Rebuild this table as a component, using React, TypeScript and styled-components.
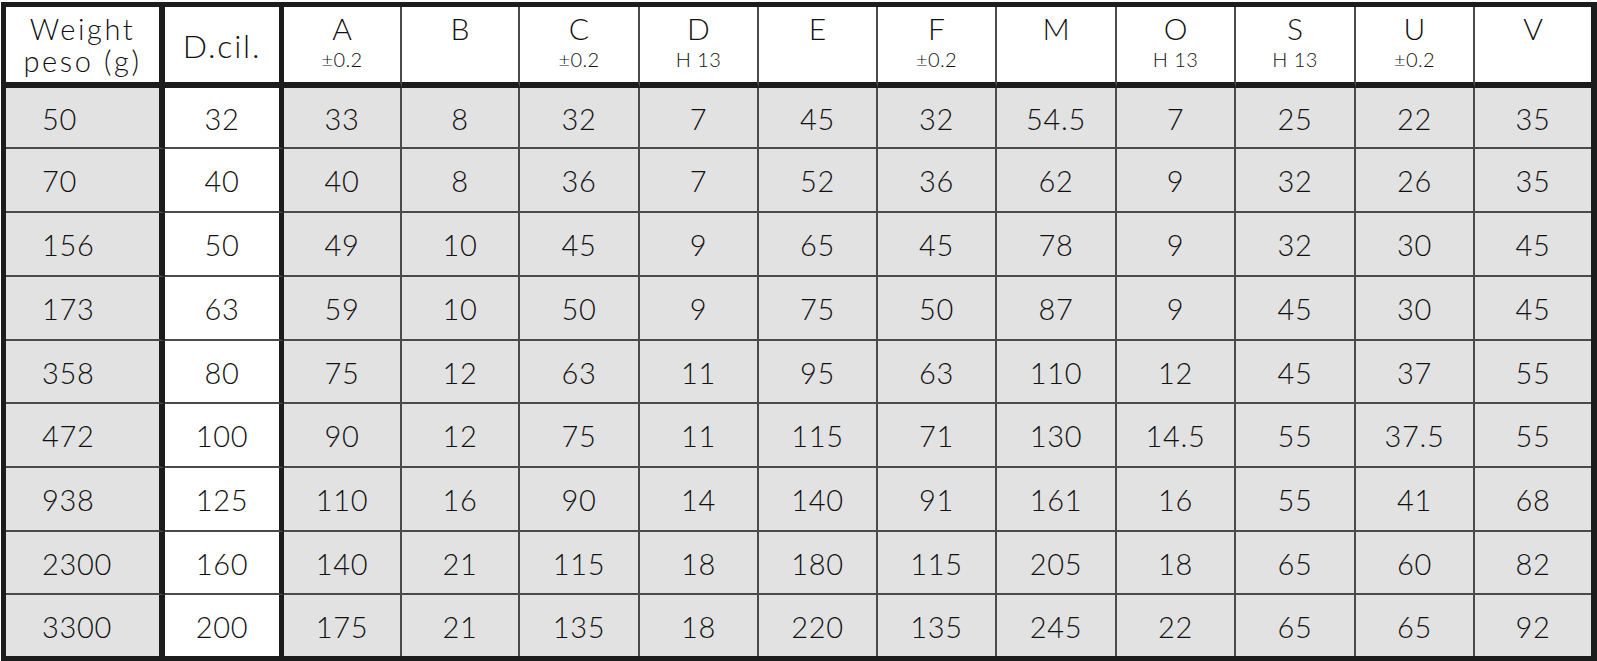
import React from 'react';
import styled, { createGlobalStyle } from 'styled-components';

interface HeadCol {
  main: string;
  sub?: string;
}

const GlobalStyle = createGlobalStyle`
  html, body {
    margin: 0;
    padding: 0;
    background: #ffffff;
  }
  body {
    font-family: Lato, "Open Sans", sans-serif;
    font-weight: 300;
    color: #111;
  }
`;

const colWidths = [159, 119, 118, 118, 120, 119, 119, 119, 120, 119, 120, 119, 116];
const rowHeights = [81, 61, 64, 64, 64, 63, 64, 64, 63, 61];

const headCols: HeadCol[] = [
  { main: 'A', sub: '±0.2' },
  { main: 'B' },
  { main: 'C', sub: '±0.2' },
  { main: 'D', sub: 'H 13' },
  { main: 'E' },
  { main: 'F', sub: '±0.2' },
  { main: 'M' },
  { main: 'O', sub: 'H 13' },
  { main: 'S', sub: 'H 13' },
  { main: 'U', sub: '±0.2' },
  { main: 'V' },
];

const rows: string[][] = [
  ['50', '32', '33', '8', '32', '7', '45', '32', '54.5', '7', '25', '22', '35'],
  ['70', '40', '40', '8', '36', '7', '52', '36', '62', '9', '32', '26', '35'],
  ['156', '50', '49', '10', '45', '9', '65', '45', '78', '9', '32', '30', '45'],
  ['173', '63', '59', '10', '50', '9', '75', '50', '87', '9', '45', '30', '45'],
  ['358', '80', '75', '12', '63', '11', '95', '63', '110', '12', '45', '37', '55'],
  ['472', '100', '90', '12', '75', '11', '115', '71', '130', '14.5', '55', '37.5', '55'],
  ['938', '125', '110', '16', '90', '14', '140', '91', '161', '16', '55', '41', '68'],
  ['2300', '160', '140', '21', '115', '18', '180', '115', '205', '18', '65', '60', '82'],
  ['3300', '200', '175', '21', '135', '18', '220', '135', '245', '22', '65', '65', '92'],
];

const DARK = '#1c1c1c';
const THIN = '#4a4a4a';

const rightBorder = (col: number) => {
  if (col === 0) return `6px solid ${DARK}`;
  if (col === 1) return `5px solid ${DARK}`;
  if (col === colWidths.length - 1) return 'none';
  return `2px solid ${THIN}`;
};

const Page = styled.div`
  padding: 2px 0 0 1px;
`;

const Table = styled.div`
  display: grid;
  grid-template-columns: ${colWidths.map((w) => `${w}px`).join(' ')};
  grid-template-rows: ${rowHeights.map((h) => `${h}px`).join(' ')};
  width: max-content;
  border: 5px solid ${DARK};
  border-right-width: 6px;
`;

const Cell = styled.div<{ $col: number; $last?: boolean }>`
  box-sizing: border-box;
  display: flex;
  align-items: center;
  justify-content: ${(p) => (p.$col === 0 ? 'flex-start' : 'center')};
  padding-left: ${(p) => (p.$col === 0 ? '36px' : '0')};
  padding-top: 1px;
  background: ${(p) => (p.$col === 1 ? '#ffffff' : '#e1e2e1')};
  border-right: ${(p) => rightBorder(p.$col)};
  border-bottom: ${(p) => (p.$last ? 'none' : `2px solid ${THIN}`)};
  font-size: 29px;
  letter-spacing: 0.7px;
`;

const HeadCell = styled.div<{ $col: number }>`
  box-sizing: border-box;
  display: flex;
  flex-direction: column;
  align-items: center;
  justify-content: ${(p) => (p.$col < 2 ? 'center' : 'flex-start')};
  padding-top: ${(p) => (p.$col < 2 ? '0' : '4px')};
  background: #ffffff;
  border-right: ${(p) => rightBorder(p.$col)};
  border-bottom: 6px solid ${DARK};
`;

const WeightLine = styled.div`
  font-size: 29px;
  line-height: 32px;
  letter-spacing: 2.6px;
  text-align: center;
`;

const CilLabel = styled.div`
  font-size: 32px;
  line-height: 34px;
  letter-spacing: 1.8px;
  margin-top: 2px;
`;

const Letter = styled.div`
  font-size: 30px;
  line-height: 34px;
`;

const Sub = styled.div`
  font-size: 20px;
  line-height: 22px;
  margin-top: 3px;
  letter-spacing: 0.4px;
`;

const App: React.FC = () => {
  return (
    <Page>
      <GlobalStyle />
      <Table>
        <HeadCell $col={0}>
          <WeightLine>Weight</WeightLine>
          <WeightLine>peso (g)</WeightLine>
        </HeadCell>
        <HeadCell $col={1}>
          <CilLabel>D.cil.</CilLabel>
        </HeadCell>
        {headCols.map((h, i) => (
          <HeadCell key={h.main} $col={i + 2}>
            <Letter>{h.main}</Letter>
            {h.sub && <Sub>{h.sub}</Sub>}
          </HeadCell>
        ))}

        {rows.map((row, r) =>
          row.map((value, c) => (
            <Cell key={`${r}-${c}`} $col={c} $last={r === rows.length - 1}>
              {value}
            </Cell>
          ))
        )}
      </Table>
    </Page>
  );
};

export default App;
